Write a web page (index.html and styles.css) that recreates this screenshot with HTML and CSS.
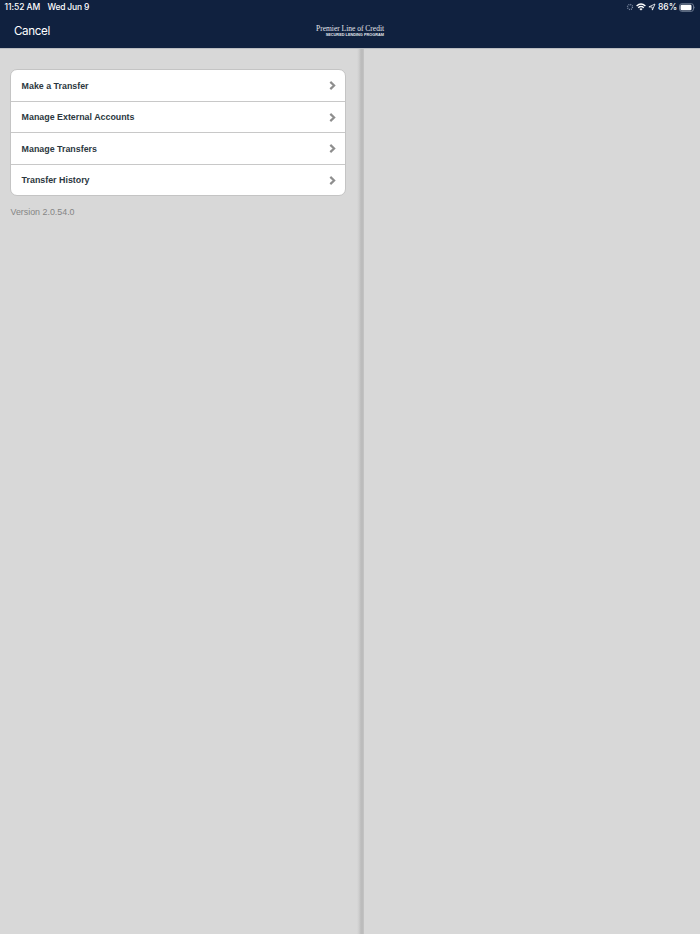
FILE: index.html
```html
<!DOCTYPE html>
<html lang="en">
<head>
    <meta charset="UTF-8">
    <meta name="viewport" content="width=device-width, initial-scale=1.0">
    <title>Premier Line of Credit</title>
    <link rel="stylesheet" href="styles.css">
</head>
<body>

<header class="header">
    <div class="status-bar">
        <div class="status-left">
            <span class="time">11:52 AM</span>
            <span class="date">Wed Jun 9</span>
        </div>
        <div class="status-right">
            <svg class="spinner" width="8" height="8" viewBox="0 0 8 8"><circle cx="4" cy="4" r="2.5"/></svg>
            <svg class="wifi" width="10" height="8" viewBox="0 0 10 8">
                <path d="M.6 2.9Q5-1.1 9.4 2.9M2.2 4.7Q5 2.2 7.8 4.7"/>
                <path class="solid" d="M3.4 6Q5 4.7 6.6 6L5 7.6z"/>
            </svg>
            <svg class="location" width="8" height="8" viewBox="0 0 8 8"><path d="M.9 3.9L7 1 4.4 7.1 4.1 4z"/></svg>
            <span class="percent">86%</span>
            <svg class="battery" width="17" height="9" viewBox="0 0 17 9">
                <rect class="shell" x=".5" y=".7" width="14" height="7.6" rx="2.2"/>
                <rect class="charge" x="1.5" y="1.7" width="11" height="5.6" rx="1.3"/>
                <path class="cap" d="M15.2 3.2Q16.4 4.5 15.2 5.8z"/>
            </svg>
        </div>
    </div>
    <div class="nav-bar">
        <a class="cancel" href="#">Cancel</a>
        <div class="logo">
            <div class="logo-title">Premier Line of Credit</div>
            <div class="logo-sub">SECURED LENDING PROGRAM</div>
        </div>
    </div>
</header>

<main class="container">
    <section class="sidebar">
        <ul class="menu">
            <li class="menu-item">
                <span>Make a Transfer</span>
                <svg class="chevron" width="7" height="9" viewBox="0 0 7 9"><path d="M1.3 .9L5.1 4.5 1.3 8.1"/></svg>
            </li>
            <li class="menu-item">
                <span>Manage External Accounts</span>
                <svg class="chevron" width="7" height="9" viewBox="0 0 7 9"><path d="M1.3 .9L5.1 4.5 1.3 8.1"/></svg>
            </li>
            <li class="menu-item">
                <span>Manage Transfers</span>
                <svg class="chevron" width="7" height="9" viewBox="0 0 7 9"><path d="M1.3 .9L5.1 4.5 1.3 8.1"/></svg>
            </li>
            <li class="menu-item">
                <span>Transfer History</span>
                <svg class="chevron" width="7" height="9" viewBox="0 0 7 9"><path d="M1.3 .9L5.1 4.5 1.3 8.1"/></svg>
            </li>
        </ul>
        <p class="version">Version 2.0.54.0</p>
    </section>
    <section class="detail"></section>
</main>

</body>
</html>
```

FILE: styles.css
```css
* {
    margin: 0;
    padding: 0;
    box-sizing: border-box;
}

body {
    display: flex;
    flex-direction: column;
    height: 100vh;
    overflow: hidden;
    font-family: "Liberation Sans", Arial, sans-serif;
    background-color: #d8d8d8;
}

/* Header */
.header {
    height: 48px;
    background-color: #10213f;
    color: white;
    font-family: Inter, sans-serif;
}

.status-bar {
    display: flex;
    justify-content: space-between;
    align-items: center;
    height: 14px;
    padding: 0 4px 0 4.5px;
    font-size: 8.5px;
    font-weight: 500;
    line-height: 14px;
    white-space: nowrap;
}

.status-left,
.status-right {
    display: flex;
    align-items: center;
}

.time {
    width: 43px;
    letter-spacing: -0.05px;
}

.date {
    width: 44px;
    letter-spacing: -0.2px;
}

.percent {
    width: 19px;
    margin: 0 2px 0 2px;
}

.spinner {
    fill: none;
    stroke: #8290a8;
    stroke-width: 1.3;
    stroke-dasharray: 1 0.96;
    margin-right: 2px;
}

.wifi {
    fill: none;
    stroke: white;
    stroke-width: 1.4;
    margin-right: 2px;
}

.wifi .solid {
    fill: white;
    stroke: none;
}

.location {
    fill: none;
    stroke: white;
    stroke-width: 0.8;
    stroke-linejoin: round;
}

.shell {
    fill: none;
    stroke: #8490a5;
    stroke-width: 0.8;
}

.charge {
    fill: white;
}

.cap {
    fill: #8490a5;
}

.nav-bar {
    display: grid;
    grid-template-columns: 1fr auto 1fr;
    align-items: center;
    height: 34px;
    padding-left: 14px;
    padding-right: 14px;
}

.cancel {
    color: white;
    font-size: 11.6px;
    letter-spacing: -0.35px;
    line-height: 34px;
    text-decoration: none;
}

.logo {
    width: 68px;
    color: #e4e7ec;
    text-align: right;
    white-space: nowrap;
}

.logo-title {
    font-family: "Liberation Serif", serif;
    font-size: 7.5px;
    line-height: 8px;
}

.logo-sub {
    font-family: "Liberation Sans", sans-serif;
    font-size: 3.85px;
    font-weight: bold;
    line-height: 4px;
}

/* Split view */
.container {
    display: flex;
    flex: 1;
    border-top: 1px solid #b9bcc1;
}

.sidebar {
    width: 364px;
    padding: 20px 18px 0 10px;
    background: linear-gradient(to right, #d8d8d8 357px, #cecece 359px, #bcbcbc 361px, #bcbcbc 363px, #c8c8c8 364px);
}

.detail {
    flex: 1;
}

.menu {
    list-style: none;
    background-color: white;
    border: 1px solid #c4c4c4;
    border-radius: 7px;
}

.menu-item {
    display: flex;
    justify-content: space-between;
    align-items: center;
    height: 31.5px;
    padding: 0.6px 9px 0 10.6px;
    border-bottom: 1px solid #c8c8c8;
    color: #2b3740;
    font-size: 8.87px;
    font-weight: bold;
}

.menu-item:last-child {
    height: 30.5px;
    border-bottom: none;
}

.chevron {
    fill: none;
    stroke: #8e8e8e;
    stroke-width: 2.2;
}

.version {
    margin-top: 10px;
    padding-left: 0.5px;
    color: #858585;
    font-size: 8.87px;
    line-height: 12px;
}
```
